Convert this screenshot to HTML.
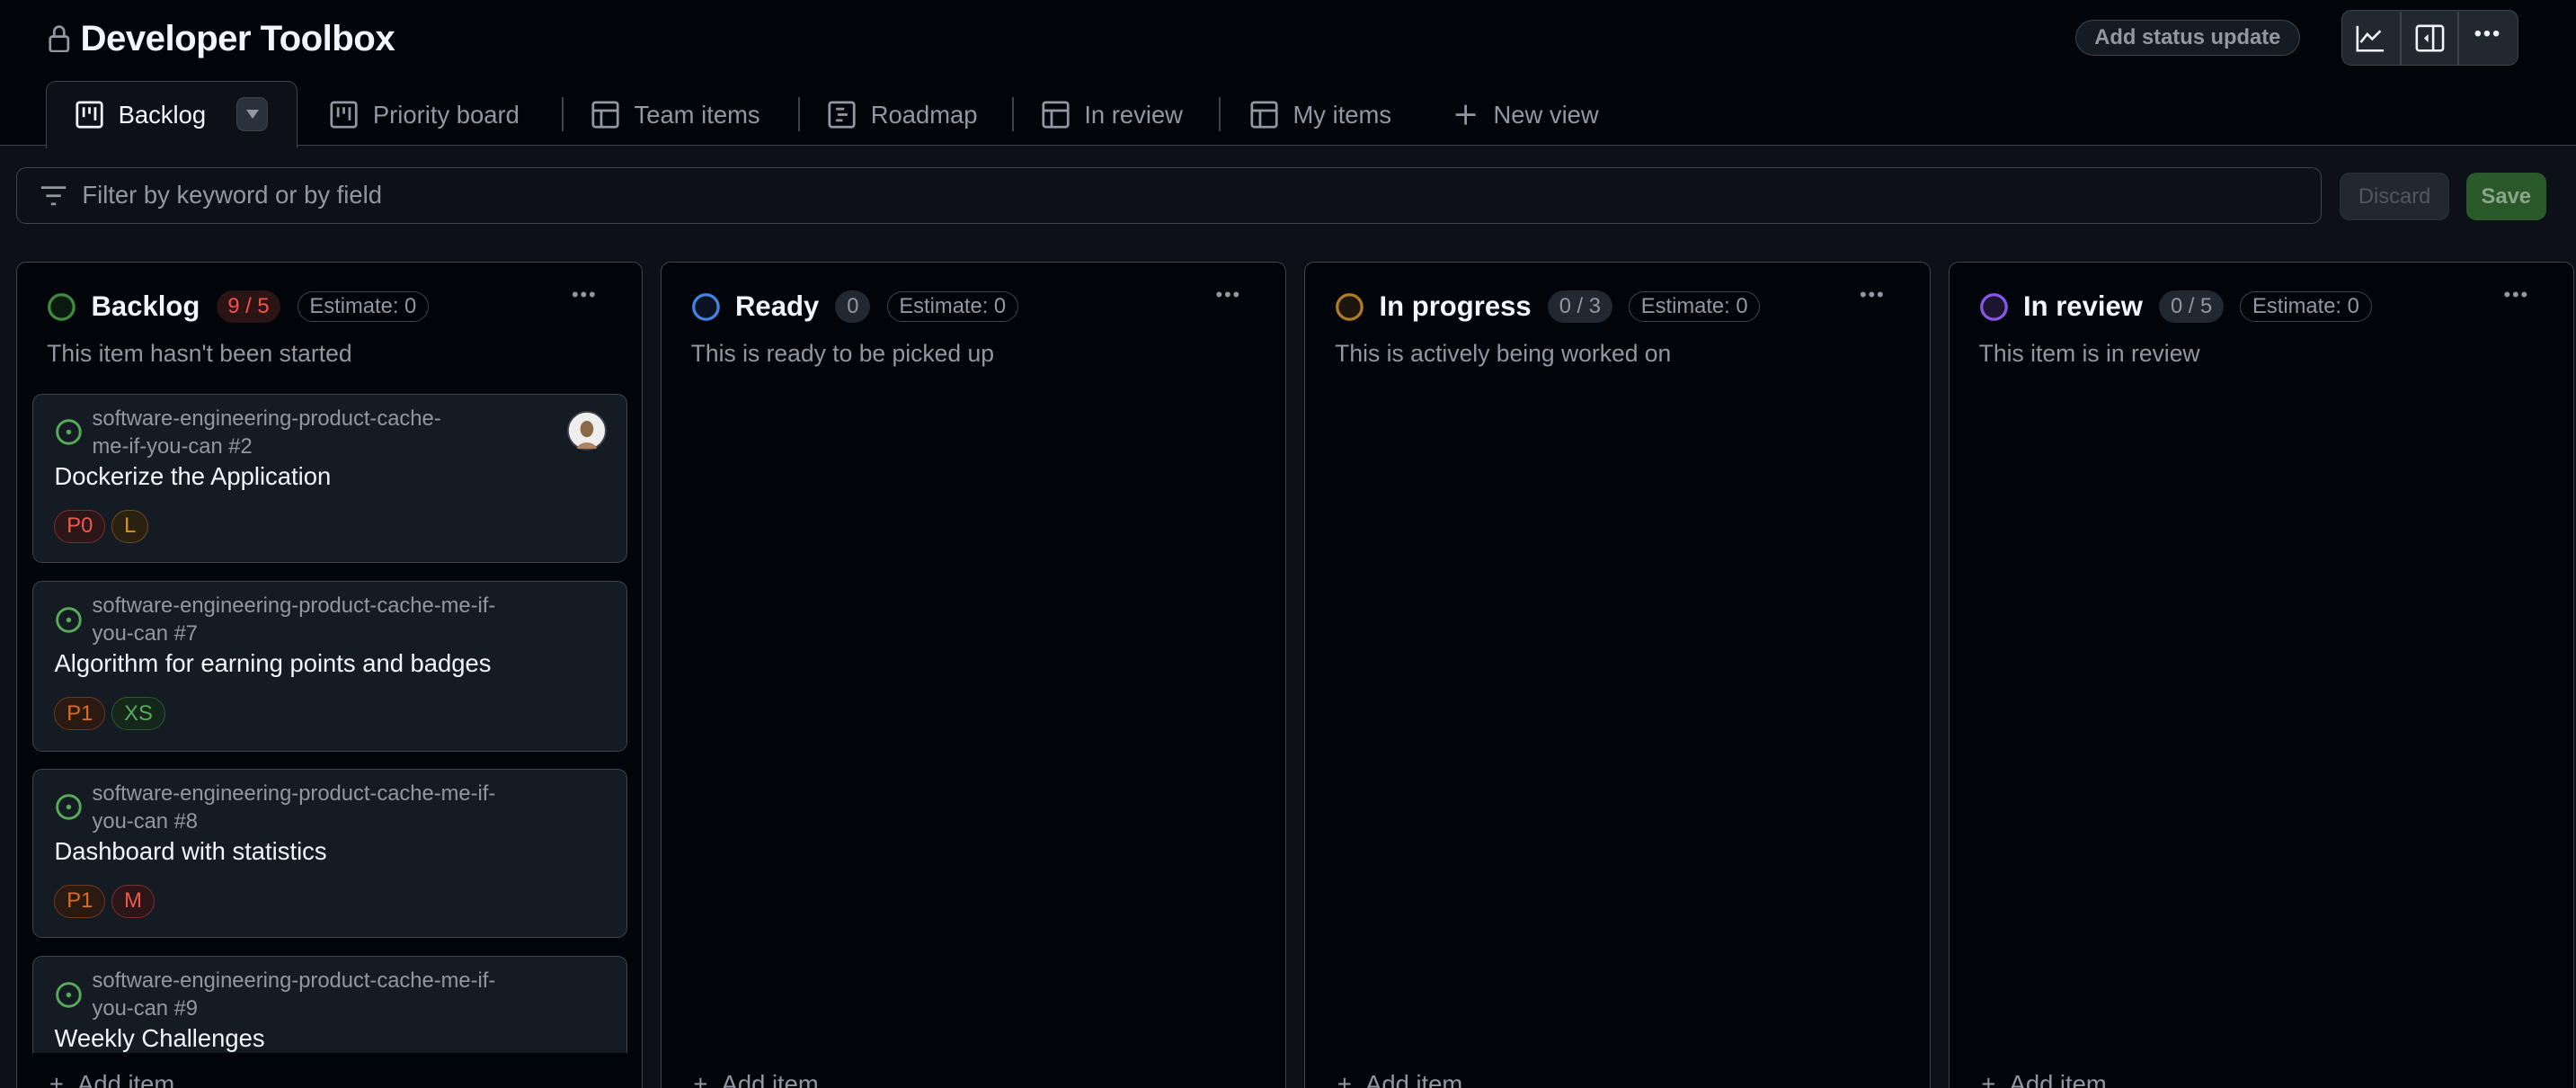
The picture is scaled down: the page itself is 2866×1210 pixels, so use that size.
<!DOCTYPE html>
<html><head><meta charset="utf-8">
<style>
html,body{margin:0;padding:0;background:#010409;overflow:hidden;width:2866px;height:1210px}
#r{zoom:1.8278;width:1568px;height:662px;position:relative;font-family:"Liberation Sans",sans-serif;color:#f0f6fc;overflow:hidden}
.a{position:absolute}
.muted{color:#9198a1}
.tab{position:absolute;top:60px;font-size:15px;color:#9198a1;display:flex;align-items:center;height:20px}
.tab svg{margin-right:9px}
.div{position:absolute;top:59px;width:1px;height:21px;background:#3d444d}
.col{position:absolute;top:159px;width:380px;height:520px;background:#010409;border:1px solid #3d444d;border-radius:6px}
.ch{position:absolute;top:17px;left:18px;display:flex;align-items:center;height:20px}
.ch .t{font-size:17px;font-weight:bold;margin-left:9px;margin-right:10px}
.cnt{font-size:13px;background:#212830;color:#9198a1;border-radius:10px;padding:2px 7px;margin-right:10px}
.est{font-size:13px;color:#9198a1;border:1px solid #3d444d;border-radius:10px;padding:1px 7px}
.desc{position:absolute;top:47px;left:18px;font-size:14.5px;color:#9198a1}
.dots{position:absolute;top:13px;right:27px;color:#9198a1;font-size:12px;letter-spacing:1px}
.card{position:absolute;left:9px;width:361px;background:#151b23;border:1px solid #3d444d;border-radius:6px}
.repo{position:absolute;left:36px;top:6px;font-size:13px;color:#9198a1;line-height:17px;width:280px}
.ct{position:absolute;left:13px;font-size:15px;color:#f0f6fc}
.lbls{position:absolute;left:13px;display:flex;gap:4px}
.lb{font-size:13px;border-radius:10px;padding:2px 7px;border:1px solid}
.ic{position:absolute;left:13px;top:14px}
.add{position:absolute;top:651px;font-size:15px;color:#9198a1}
</style></head><body><div id="r">
<svg class="a" style="left:29px;top:14px" width="14" height="18" viewBox="0 0 14 18"><rect x="1.5" y="8" width="11" height="9" rx="1.5" fill="none" stroke="#9198a1" stroke-width="1.5"/><path d="M4 8V5a3 3 0 0 1 6 0v3" fill="none" stroke="#9198a1" stroke-width="1.5"/></svg>
<div class="a" style="left:49px;top:11px;font-size:22px;font-weight:bold;letter-spacing:-0.3px">Developer Toolbox</div>
<div class="a" style="left:1263px;top:12px;width:136px;height:21px;border:1px solid #3d444d;border-radius:12px;background:#151b23;font-size:13px;font-weight:bold;color:#9198a1;text-align:center;line-height:21px">Add status update</div>
<div class="a" style="left:1425px;top:6px;width:107px;height:33px;border:1px solid #3d444d;border-radius:6px;background:#212830"></div>
<div class="a" style="left:1461px;top:7px;width:1px;height:33px;background:#3d444d"></div>
<div class="a" style="left:1496px;top:7px;width:1px;height:33px;background:#3d444d"></div>
<svg class="a" style="left:1434px;top:15px" width="18" height="17" viewBox="0 0 18 17"><path d="M1 1v15h16M3 11l4-5 3 3 5-5" fill="none" stroke="#f0f6fc" stroke-width="1.4"/></svg>
<svg class="a" style="left:1470px;top:15px" width="18" height="17" viewBox="0 0 18 17"><rect x="1" y="1" width="16" height="15" rx="1.5" fill="none" stroke="#f0f6fc" stroke-width="1.4"/><path d="M11 1v15" stroke="#f0f6fc" stroke-width="1.4"/><path d="M8 6l-2.5 2.5L8 11z" fill="#f0f6fc"/></svg>
<div class="a" style="left:1506px;top:13px;font-size:13px;color:#f0f6fc;letter-spacing:1px">•••</div>
<div class="a" style="left:0;top:88px;width:1568px;height:574px;background:#0d1117;border-top:1px solid #3d444d"></div>
<div class="a" style="left:28px;top:49px;width:152px;height:41px;border:1px solid #3d444d;border-bottom:none;border-radius:6px 6px 0 0;background:#0d1117"></div>
<div class="tab" style="left:46px;color:#f0f6fc"><svg width="17" height="17" viewBox="0 0 17 17"><rect x="1" y="1" width="15" height="15" rx="1.5" fill="none" stroke="#f0f6fc" stroke-width="1.5"/><path d="M5 4v6M8.5 4v4M12 4v8" stroke="#f0f6fc" stroke-width="1.5"/></svg>Backlog</div>
<div class="a" style="left:144px;top:59px;width:18px;height:20px;border-radius:5px;background:#2a313c;border:1px solid #3d444d"><div style="margin:7px auto 0;width:0;height:0;border-left:4px solid transparent;border-right:4px solid transparent;border-top:6px solid #9198a1"></div></div>
<div class="tab" style="left:201px"><svg width="17" height="17" viewBox="0 0 17 17"><rect x="1" y="1" width="15" height="15" rx="1.5" fill="none" stroke="#9198a1" stroke-width="1.5"/><path d="M5 4v6M8.5 4v4M12 4v8" stroke="#9198a1" stroke-width="1.5"/></svg>Priority board</div>
<div class="div" style="left:342px"></div>
<div class="tab" style="left:360px"><svg width="17" height="17" viewBox="0 0 17 17"><rect x="1" y="1" width="15" height="15" rx="1.5" fill="none" stroke="#9198a1" stroke-width="1.5"/><path d="M1 6h15M6 6v10" stroke="#9198a1" stroke-width="1.5"/></svg>Team items</div>
<div class="div" style="left:486px"></div>
<div class="tab" style="left:504px"><svg width="17" height="17" viewBox="0 0 17 17"><rect x="1" y="1" width="15" height="15" rx="1.5" fill="none" stroke="#9198a1" stroke-width="1.5"/><path d="M5 5h5M6 8.5h6M5 12h4" stroke="#9198a1" stroke-width="1.5"/></svg>Roadmap</div>
<div class="div" style="left:616px"></div>
<div class="tab" style="left:634px"><svg width="17" height="17" viewBox="0 0 17 17"><rect x="1" y="1" width="15" height="15" rx="1.5" fill="none" stroke="#9198a1" stroke-width="1.5"/><path d="M1 6h15M6 6v10" stroke="#9198a1" stroke-width="1.5"/></svg>In review</div>
<div class="div" style="left:742px"></div>
<div class="tab" style="left:761px"><svg width="17" height="17" viewBox="0 0 17 17"><rect x="1" y="1" width="15" height="15" rx="1.5" fill="none" stroke="#9198a1" stroke-width="1.5"/><path d="M1 6h15M6 6v10" stroke="#9198a1" stroke-width="1.5"/></svg>My items</div>
<div class="tab" style="left:884px"><svg width="16" height="16" viewBox="0 0 16 16"><path d="M8 2v12M2 8h12" stroke="#9198a1" stroke-width="1.5"/></svg>New view</div>
<div class="a" style="left:10px;top:102px;width:1402px;height:33px;border:1px solid #3d444d;border-radius:6px;background:#0d1117"></div>
<svg class="a" style="left:24px;top:112px" width="17" height="14" viewBox="0 0 17 14"><path d="M1 2h15M4 7h9M7 12h3" stroke="#9198a1" stroke-width="1.5"/></svg>
<div class="a muted" style="left:50px;top:110px;font-size:15px">Filter by keyword or by field</div>
<div class="a" style="left:1424px;top:105px;width:66px;height:28px;border:1px solid #2a313c;border-radius:6px;background:#212830;color:#50575f;font-size:13px;text-align:center;line-height:28px">Discard</div>
<div class="a" style="left:1501px;top:105px;width:49px;height:29px;border-radius:6px;background:#29582a;color:#8aa58a;font-size:13px;font-weight:bold;text-align:center;line-height:29px">Save</div>
<div class="col" style="left:10px">
 <div class="ch"><svg width="18" height="18"><circle cx="9" cy="9" r="7.5" fill="#0b1a0f" stroke="#3e8a3e" stroke-width="1.8"/></svg><span class="t">Backlog</span><span class="cnt" style="background:#2a1414;color:#f85149">9 / 5</span><span class="est">Estimate: 0</span></div>
 <div class="dots">•••</div>
 <div class="desc">This item hasn't been started</div>
 <div class="card" style="top:80px;height:102px">
  <svg class="ic" width="18" height="18"><circle cx="9" cy="9" r="7" fill="none" stroke="#57ab5a" stroke-width="1.6"/><circle cx="9" cy="9" r="1.5" fill="#57ab5a"/></svg>
  <div class="repo">software-engineering-product-cache-<br>me-if-you-can #2</div>
  <svg class="a" style="right:12px;top:10px" width="24" height="24"><circle cx="12" cy="12" r="11.5" fill="#eee" stroke="#3d444d"/><ellipse cx="12" cy="11" rx="4" ry="5" fill="#8a6a4a"/><path d="M6 23c1-5 11-5 12 0" fill="#b08060"/></svg>
  <div class="ct" style="top:41px">Dockerize the Application</div>
  <div class="lbls" style="top:70px"><span class="lb" style="color:#f0584f;border-color:#7a2e2e;background:#2d1617">P0</span><span class="lb" style="color:#d29922;border-color:#6b4e1a;background:#2b2111">L</span></div>
 </div>
 <div class="card" style="top:194px;height:103px">
  <svg class="ic" width="18" height="18"><circle cx="9" cy="9" r="7" fill="none" stroke="#57ab5a" stroke-width="1.6"/><circle cx="9" cy="9" r="1.5" fill="#57ab5a"/></svg>
  <div class="repo">software-engineering-product-cache-me-if-<br>you-can #7</div>
  <div class="ct" style="top:41px">Algorithm for earning points and badges</div>
  <div class="lbls" style="top:70px"><span class="lb" style="color:#db6d28;border-color:#6b3a1e;background:#2a1a11">P1</span><span class="lb" style="color:#57ab5a;border-color:#2b5a30;background:#15271a">XS</span></div>
 </div>
 <div class="card" style="top:308px;height:102px">
  <svg class="ic" width="18" height="18"><circle cx="9" cy="9" r="7" fill="none" stroke="#57ab5a" stroke-width="1.6"/><circle cx="9" cy="9" r="1.5" fill="#57ab5a"/></svg>
  <div class="repo">software-engineering-product-cache-me-if-<br>you-can #8</div>
  <div class="ct" style="top:41px">Dashboard with statistics</div>
  <div class="lbls" style="top:70px"><span class="lb" style="color:#db6d28;border-color:#6b3a1e;background:#2a1a11">P1</span><span class="lb" style="color:#f0584f;border-color:#7a2e2e;background:#2d1617">M</span></div>
 </div>
 <div class="card" style="top:422px;height:100px">
  <svg class="ic" width="18" height="18"><circle cx="9" cy="9" r="7" fill="none" stroke="#57ab5a" stroke-width="1.6"/><circle cx="9" cy="9" r="1.5" fill="#57ab5a"/></svg>
  <div class="repo">software-engineering-product-cache-me-if-<br>you-can #9</div>
  <div class="ct" style="top:41px">Weekly Challenges</div>
 </div>
 <div class="a" style="left:0;top:481px;width:380px;height:40px;background:#010409"></div>
</div>
<div class="col" style="left:402px">
 <div class="ch"><svg width="18" height="18"><circle cx="9" cy="9" r="7.5" fill="#0b1224" stroke="#4184e4" stroke-width="1.8"/></svg><span class="t">Ready</span><span class="cnt">0</span><span class="est">Estimate: 0</span></div>
 <div class="dots">•••</div>
 <div class="desc">This is ready to be picked up</div>
</div>
<div class="col" style="left:794px">
 <div class="ch"><svg width="18" height="18"><circle cx="9" cy="9" r="7.5" fill="#1d160e" stroke="#b07b24" stroke-width="1.8"/></svg><span class="t">In progress</span><span class="cnt">0 / 3</span><span class="est">Estimate: 0</span></div>
 <div class="dots">•••</div>
 <div class="desc">This is actively being worked on</div>
</div>
<div class="col" style="left:1186px">
 <div class="ch"><svg width="18" height="18"><circle cx="9" cy="9" r="7.5" fill="#1b1530" stroke="#8957e5" stroke-width="1.8"/></svg><span class="t">In review</span><span class="cnt">0 / 5</span><span class="est">Estimate: 0</span></div>
 <div class="dots">•••</div>
 <div class="desc">This item is in review</div>
</div>
<div class="add" style="left:30px">+&nbsp;&nbsp;Add item</div>
<div class="add" style="left:422px">+&nbsp;&nbsp;Add item</div>
<div class="add" style="left:814px">+&nbsp;&nbsp;Add item</div>
<div class="add" style="left:1206px">+&nbsp;&nbsp;Add item</div>
</div></body></html>
